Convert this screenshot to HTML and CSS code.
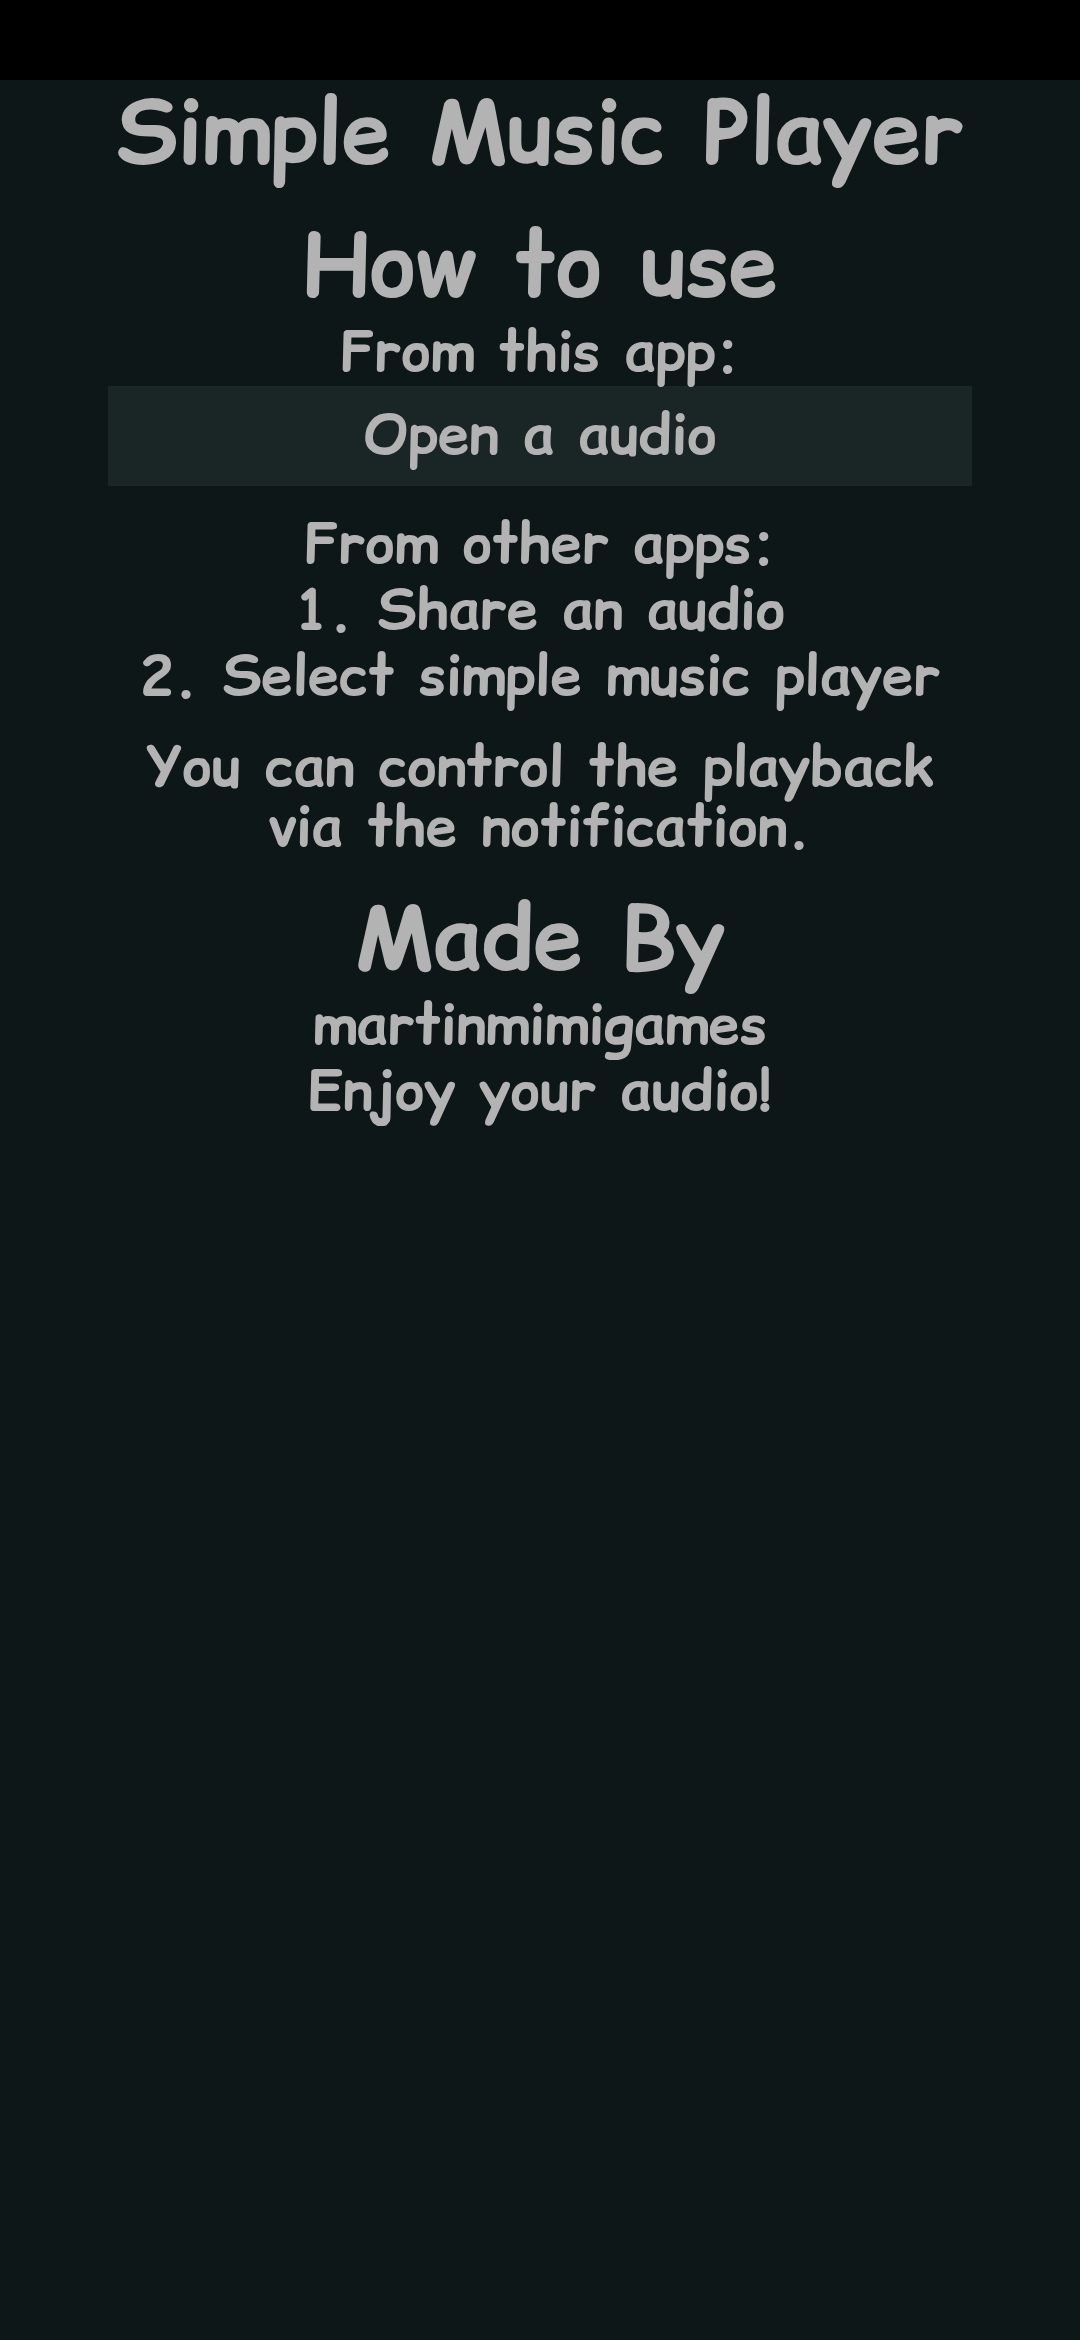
FILE: index.html
```html
<!DOCTYPE html>
<html lang="en">
<head>
<meta charset="utf-8">
<meta name="viewport" content="width=device-width, initial-scale=1">
<title>Simple Music Player</title>
<link rel="stylesheet" href="styles.css">
</head>
<body>
<div class="status-bar"></div>
<main class="screen">
<h1 class="title">Simple Music Player</h1>
<section class="section">
<h2 class="title">How to use</h2>
<p class="line">From this app:</p>
<button class="open-button" type="button">Open a audio</button>
</section>
<section class="section">
<p class="line">From other apps:</p>
<p class="line">1. Share an audio</p>
<p class="line">2. Select simple music player</p>
</section>
<section class="section">
<p class="note">You can control the playback via the notification.</p>
</section>
<section class="section">
<h2 class="title">Made By</h2>
<p class="line">martinmimigames</p>
<p class="line">Enjoy your audio!</p>
</section>
</main>
</body>
</html>
```

FILE: styles.css
```css
* {
  box-sizing: border-box;
}

body {
  margin: 0;
  min-height: 100vh;
  background: #0e1718;
  color: #b3b3b3;
  font-family: "Coming Soon", "Comic Relief", "Comic Neue", Lato, sans-serif;
  font-weight: 700;
  text-align: center;
}

.status-bar {
  height: 80px;
  background: #000;
}

.screen {
  padding: 0 10%;
}

.title {
  margin: 0;
  padding-bottom: 4px;
  font-size: 88px;
  line-height: 103px;
  font-weight: 700;
}

.section {
  margin-top: 26px;
}

.line,
.note {
  margin: 0;
  padding-bottom: 4px;
  font-size: 56px;
  line-height: 62px;
}

.note {
  line-height: 60px;
}

.open-button {
  display: block;
  width: 100%;
  border: 0;
  padding: 17px 0 21px;
  background: #1a2525;
  color: inherit;
  font: inherit;
  font-size: 56px;
  line-height: 62px;
}
```
